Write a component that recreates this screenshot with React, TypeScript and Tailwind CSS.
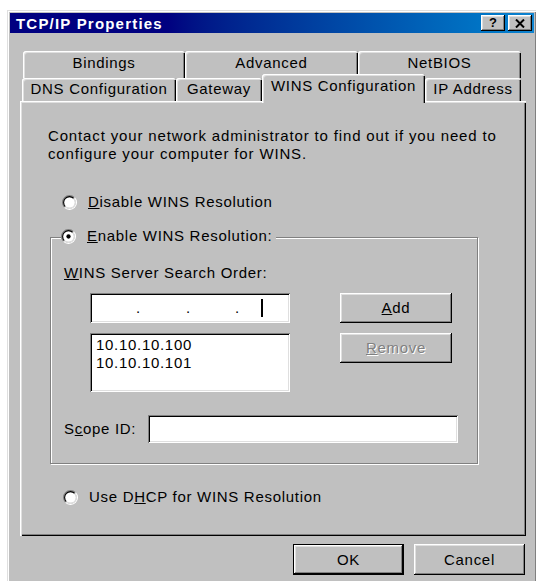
import type { ReactNode } from 'react';

// 3D edges used across the dialog
const raised =
  'shadow-[inset_-1px_-1px_0_#000,inset_1px_1px_0_#fff,inset_-2px_-2px_0_#808080,inset_2px_2px_0_#dfdfdf]';
const sunken =
  'shadow-[inset_1px_1px_0_#808080,inset_-1px_-1px_0_#fff,inset_2px_2px_0_#000,inset_-2px_-2px_0_#dfdfdf]';
const tabEdge =
  'rounded-t-[3px] bg-[#c0c0c0] shadow-[inset_1px_1px_0_#fff,inset_2px_2px_0_#dfdfdf,inset_-1px_0_0_#000,inset_-2px_0_0_#808080]';

function Radio({ checked }: { checked?: boolean }) {
  return (
    <svg width="15" height="15" viewBox="0 0 14 14" className="shrink-0">
      <circle cx="7" cy="7" r="5" fill="#fff" />
      <path d="M2.4 11.6A6.5 6.5 0 0 1 11.6 2.4" fill="none" stroke="#808080" />
      <path d="M11.6 2.4A6.5 6.5 0 0 1 2.4 11.6" fill="none" stroke="#fff" />
      <path d="M3.1 10.9A5.5 5.5 0 0 1 10.9 3.1" fill="none" stroke="#000" />
      <path d="M10.9 3.1A5.5 5.5 0 0 1 3.1 10.9" fill="none" stroke="#dfdfdf" />
      {checked && <circle cx="7" cy="7" r="2" fill="#000" />}
    </svg>
  );
}

function RadioRow({ checked, children }: { checked?: boolean; children: ReactNode }) {
  return (
    <div className="flex h-[18px] items-center gap-[11px]">
      <Radio checked={checked} />
      <span>{children}</span>
    </div>
  );
}

function Tab({ label, width, selected }: { label: string; width: string; selected?: boolean }) {
  if (selected) {
    return (
      <div className={`relative z-10 -mt-[4px] h-[29px] pt-[3px] text-center ${width} ${tabEdge}`}>{label}</div>
    );
  }
  return <div className={`h-[23px] pt-[2px] text-center ${width} ${tabEdge}`}>{label}</div>;
}

function Button({ children, wide, isDefault, disabled }: { children: ReactNode; wide?: boolean; isDefault?: boolean; disabled?: boolean }) {
  const size = wide ? 'w-[111px] h-[31px]' : 'w-[112px] h-[30px]';
  const text = disabled ? 'text-[#808080] [text-shadow:1px_1px_0_#fff]' : 'text-black';
  if (isDefault) {
    return (
      <div className={`${size} border border-black`}>
        <div className={`flex h-full w-full items-center justify-center ${raised} ${text}`}>{children}</div>
      </div>
    );
  }
  return <div className={`flex items-center justify-center ${size} ${raised} ${text}`}>{children}</div>;
}

export default function App() {
  return (
    <div className="min-h-screen bg-white pl-[7px] pt-[10px] font-['Liberation_Sans',Arial,sans-serif] text-[15px] leading-[18px] tracking-[0.7px] text-black">
      <div className="h-[600px] w-[530px] bg-[#c0c0c0] p-[3px] shadow-[inset_1px_1px_0_#dfdfdf,inset_2px_2px_0_#fff,inset_-1px_-1px_0_#000,inset_-2px_-2px_0_#808080]">
        {/* caption */}
        <div className="flex h-[20px] items-center bg-linear-to-r from-[#000080] from-30% to-[#1084d0] pl-[6px] pr-[2px]">
          <div className="flex-1 pt-[2px] font-bold tracking-[1.2px] text-white">TCP/IP Properties</div>
          <div className={`flex h-[16px] w-[24px] items-center justify-center bg-[#c0c0c0] text-[13px] font-bold tracking-normal ${raised}`}>
            ?
          </div>
          <div className={`ml-[3px] flex h-[16px] w-[24px] items-center justify-center bg-[#c0c0c0] ${raised}`}>
            <svg width="10" height="9" viewBox="0 0 10 9">
              <path d="M1 0.5L9 8.5M9 0.5L1 8.5" stroke="#000" strokeWidth="2" />
            </svg>
          </div>
        </div>

        <div className="pl-[10px] pr-[8px]">
          {/* back row of tabs */}
          <div className="ml-[3px] mt-[18px] flex h-[27px]">
            <div className={`h-[27px] w-[162px] pt-[3px] text-center ${tabEdge}`}>Bindings</div>
            <div className={`h-[27px] w-[173px] pt-[3px] text-center ${tabEdge}`}>Advanced</div>
            <div className={`h-[27px] w-[163px] pt-[3px] text-center ${tabEdge}`}>NetBIOS</div>
          </div>
          {/* front row of tabs */}
          <div className="ml-[2px] flex h-[23px] items-start">
            <Tab label="DNS Configuration" width="w-[154px]" />
            <Tab label="Gateway" width="w-[86px]" />
            <Tab label="WINS Configuration" width="w-[163px]" selected />
            <Tab label="IP Address" width="w-[96px]" />
          </div>

          {/* page */}
          <div className="h-[435px] pl-[28px] pt-[26px] shadow-[inset_1px_1px_0_#fff,inset_2px_2px_0_#dfdfdf,inset_-1px_-1px_0_#000,inset_-2px_-2px_0_#808080]">
            <p className="tracking-[0.85px]">
              Contact your network administrator to find out if you need to
              <br />
              configure your computer for WINS.
            </p>

            <div className="ml-[14px] mt-[30px]">
              <RadioRow>
                <u>D</u>isable WINS Resolution
              </RadioRow>
            </div>

            <div className="ml-[2px] mt-[26px] w-[428px] border border-[#808080] pb-[20px] pl-[13px] shadow-[inset_1px_1px_0_#fff,1px_1px_0_#fff]">
              <div className="-mt-[11px] -ml-[3px] w-fit bg-[#c0c0c0] pr-[4px]">
                <RadioRow checked>
                  <u>E</u>nable WINS Resolution:
                </RadioRow>
              </div>

              <div className="mt-[19px]">
                <u>W</u>INS Server Search Order:
              </div>

              <div className="ml-[26px] mt-[11px] grid grid-cols-[200px_112px] gap-x-[50px] gap-y-[10px]">
                <div className={`flex h-[30px] items-center bg-white ${sunken}`}>
                  <span className="ml-[46px] w-[50px]">.</span>
                  <span className="w-[49px]">.</span>
                  <span className="w-[26px]">.</span>
                  <span className="h-[18px] w-[2px] bg-black" />
                </div>
                <Button>
                  <span>
                    <u>A</u>dd
                  </span>
                </Button>
                <div className={`h-[59px] bg-white pl-[6px] pt-[3px] ${sunken}`}>
                  <div>10.10.10.100</div>
                  <div>10.10.10.101</div>
                </div>
                <Button disabled>
                  <span>
                    <u>R</u>emove
                  </span>
                </Button>
              </div>

              <div className="mt-[23px] flex items-center">
                <span className="w-[84px]">
                  S<u>c</u>ope ID:
                </span>
                <div className={`h-[28px] w-[310px] bg-white ${sunken}`} />
              </div>
            </div>

            <div className="ml-[15px] mt-[24px]">
              <RadioRow>
                Use D<u>H</u>CP for WINS Resolution
              </RadioRow>
            </div>
          </div>

          <div className="mt-[8px] flex justify-end gap-[10px] pr-[1px]">
            <Button wide isDefault>
              OK
            </Button>
            <Button wide>Cancel</Button>
          </div>
        </div>
      </div>
    </div>
  );
}
